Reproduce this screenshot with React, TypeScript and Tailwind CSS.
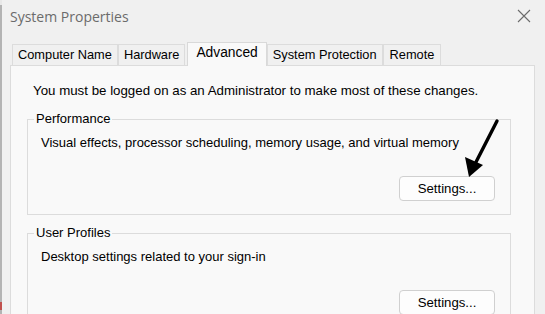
import React from "react";

function Tab({ label, selected, px }: { label: string; selected?: boolean; px?: string }) {
  if (selected) {
    return (
      <div className="relative z-10 -mb-px ml-[2px] flex h-[24px] shrink-0 items-center self-end border border-b-0 border-[#d9d9d9] bg-[#f9f9f9] px-[8px] pb-[2px] text-[13.8px] text-black">
        {label}
      </div>
    );
  }
  return (
    <div
      className={`flex h-[21px] shrink-0 items-center self-end border border-b-0 border-[#dcdcdc] bg-[#f0f0f0] text-[12.8px] text-black ${px ?? "px-[5px]"}`}
    >
      {label}
    </div>
  );
}

function Group({
  title,
  text,
  height,
}: {
  title: string;
  text: string;
  height: string;
}) {
  return (
    <div className={`relative ml-[16px] w-[484px] shrink-0 border border-[#dcdcdc] ${height}`}>
      <div className="absolute -top-[9px] left-[6px] bg-[#f9f9f9] px-[2px] text-[13px] leading-[16px] text-black">
        {title}
      </div>
      <div className="flex h-full flex-col">
        <div className="pl-[13px] pt-[15px] text-[13px] leading-[16px] text-black">{text}</div>
        <div className="flex justify-end pr-[15px] pt-[25px]">
          <div className="flex h-[25px] w-[96px] items-center justify-center rounded-[4px] border border-[#d0d0d0] bg-[#fdfdfd] text-[13.2px] text-black">
            Settings...
          </div>
        </div>
      </div>
    </div>
  );
}

export default function App() {
  return (
    <div
      className="relative flex h-[314px] w-[545px] overflow-hidden bg-[#f0f0f0]"
      style={{ fontFamily: '"Liberation Sans", Arial, sans-serif' }}
    >
      <div className="flex w-[2px] shrink-0 flex-col bg-[#b3b3b3]">
        <div className="h-[5px] bg-[#e8e8e8]" />
        <div className="flex-1" />
        <div className="mb-[4px] h-[8px] bg-[#c0504d]" />
      </div>
      <div className="flex flex-1 flex-col">
        <div className="flex h-[32px] shrink-0 items-center justify-between pl-[8px] pr-[14px]">
          <span
            className="text-[14px] text-[#6b6b6b]"
            style={{ fontFamily: '"Open Sans", "Noto Sans", sans-serif' }}
          >
            System Properties
          </span>
          <svg width="14" height="14" viewBox="0 0 14 14">
            <path d="M1 1 L13 13 M13 1 L1 13" stroke="#6b6b6b" strokeWidth="1.1" fill="none" />
          </svg>
        </div>
        <div className="mt-[10px] flex h-[23px] shrink-0 pl-[10px]">
          <Tab label="Computer Name" />
          <Tab label="Hardware" />
          <Tab label="Advanced" selected />
          <Tab label="System Protection" />
          <Tab label="Remote" px="px-[6px]" />
        </div>
        <div className="ml-[8px] flex h-[260px] w-[525px] shrink-0 flex-col border border-[#dcdcdc] bg-[#f9f9f9]">
          <div className="shrink-0 pl-[22px] pt-[17px] text-[13.3px] leading-[16px] text-black">
            You must be logged on as an Administrator to make most of these changes.
          </div>
          <div className="mt-[20px] shrink-0">
            <Group
              title="Performance"
              text="Visual effects, processor scheduling, memory usage, and virtual memory"
              height="h-[96px]"
            />
          </div>
          <div className="mt-[18px] shrink-0">
            <Group title="User Profiles" text="Desktop settings related to your sign-in" height="h-[120px]" />
          </div>
        </div>
      </div>
      <svg
        className="pointer-events-none absolute left-0 top-0"
        width="545"
        height="314"
        viewBox="0 0 545 314"
      >
        <path d="M497 121 L475 164" stroke="#000" strokeWidth="3.4" strokeLinecap="round" fill="none" />
        <polygon points="469,177 465,157 483,165" fill="#000" />
      </svg>
    </div>
  );
}
